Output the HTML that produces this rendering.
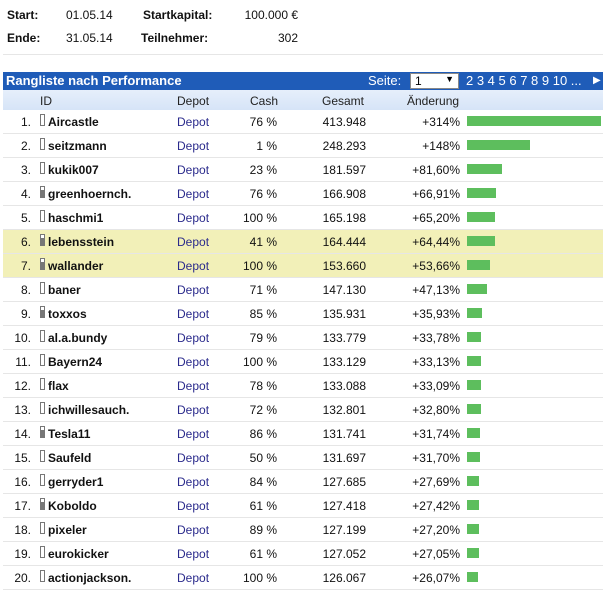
<!DOCTYPE html>
<html><head><meta charset="utf-8"><style>
*{margin:0;padding:0;box-sizing:border-box}
body{width:612px;height:587px;background:#fff;font-family:"Liberation Sans",Arial,sans-serif;font-size:12px;color:#111;position:relative;overflow:hidden}
.a{position:absolute;white-space:nowrap}
.b{font-weight:bold}
.top{position:absolute;left:3px;top:72px;width:600px;height:18px;background:#1f5cb8;color:#fff;font-size:13px}
.sub{position:absolute;left:3px;top:90px;width:600px;height:20px;background:linear-gradient(#e6effb,#d6e4f7);color:#222}
.row{position:absolute;left:3px;width:600px;height:24px;border-bottom:1px solid #e6e6e6}
.row span{position:absolute;top:5px;white-space:nowrap}
.n{right:572px;text-align:right}
.ic{left:37px;top:4px!important;width:5px;height:12px;border:1px solid #777;background:#fff}
.ic.f{background:linear-gradient(#fff 30%,#777 30%)}
.nm{left:45px;font-weight:bold}
.dp{left:174px;color:#2a2a8c}
.c{right:326px}
.g{right:237px}
.p{right:143px}
.bar{position:absolute;left:464px;top:6px!important;height:10px;background:#5dbe5d}
.hl{background:#f2f0b8}
</style></head><body>
<div class="a b" style="left:7px;top:8px">Start:</div>
<div class="a" style="left:66px;top:8px">01.05.14</div>
<div class="a b" style="left:143px;top:8px">Startkapital:</div>
<div class="a" style="right:314px;top:8px">100.000 €</div>
<div class="a b" style="left:7px;top:31px">Ende:</div>
<div class="a" style="left:66px;top:31px">31.05.14</div>
<div class="a b" style="left:141px;top:31px">Teilnehmer:</div>
<div class="a" style="right:314px;top:31px">302</div>
<div class="a" style="left:3px;top:54px;width:600px;height:1px;background:#e6e6e6"></div>

<div class="top">
<span class="a b" style="left:3px;top:1px">Rangliste nach Performance</span>
<span class="a" style="left:365px;top:1px">Seite:</span>
<span class="a" style="left:407px;top:1px;width:49px;height:16px;background:#fff;border:1px solid #888;color:#000;padding-left:4px;font-size:12px">1<span style="position:absolute;right:4px;top:0;font-size:9px">▼</span></span>
<span class="a" style="left:463px;top:1px">2 3 4 5 6 7 8 9 10 ...</span>
<span class="a" style="left:590px;top:3px;font-size:10px">▶</span>
</div>
<div class="sub">
<span class="a" style="left:37px;top:4px">ID</span>
<span class="a" style="left:174px;top:4px">Depot</span>
<span class="a" style="left:247px;top:4px">Cash</span>
<span class="a" style="left:319px;top:4px">Gesamt</span>
<span class="a" style="left:404px;top:4px">Änderung</span>
</div>

<div class="row" style="top:110px"><span class="n">1.</span><span class="ic"></span><span class="nm">Aircastle</span><span class="dp">Depot</span><span class="c">76 %</span><span class="g">413.948</span><span class="p">+314%</span><span class="bar" style="width:134px"></span></div>
<div class="row" style="top:134px"><span class="n">2.</span><span class="ic"></span><span class="nm">seitzmann</span><span class="dp">Depot</span><span class="c">1 %</span><span class="g">248.293</span><span class="p">+148%</span><span class="bar" style="width:63px"></span></div>
<div class="row" style="top:158px"><span class="n">3.</span><span class="ic"></span><span class="nm">kukik007</span><span class="dp">Depot</span><span class="c">23 %</span><span class="g">181.597</span><span class="p">+81,60%</span><span class="bar" style="width:35px"></span></div>
<div class="row" style="top:182px"><span class="n">4.</span><span class="ic f"></span><span class="nm">greenhoernch.</span><span class="dp">Depot</span><span class="c">76 %</span><span class="g">166.908</span><span class="p">+66,91%</span><span class="bar" style="width:29px"></span></div>
<div class="row" style="top:206px"><span class="n">5.</span><span class="ic"></span><span class="nm">haschmi1</span><span class="dp">Depot</span><span class="c">100 %</span><span class="g">165.198</span><span class="p">+65,20%</span><span class="bar" style="width:28px"></span></div>
<div class="row hl" style="top:230px"><span class="n">6.</span><span class="ic f"></span><span class="nm">lebensstein</span><span class="dp">Depot</span><span class="c">41 %</span><span class="g">164.444</span><span class="p">+64,44%</span><span class="bar" style="width:28px"></span></div>
<div class="row hl" style="top:254px"><span class="n">7.</span><span class="ic f"></span><span class="nm">wallander</span><span class="dp">Depot</span><span class="c">100 %</span><span class="g">153.660</span><span class="p">+53,66%</span><span class="bar" style="width:23px"></span></div>
<div class="row" style="top:278px"><span class="n">8.</span><span class="ic"></span><span class="nm">baner</span><span class="dp">Depot</span><span class="c">71 %</span><span class="g">147.130</span><span class="p">+47,13%</span><span class="bar" style="width:20px"></span></div>
<div class="row" style="top:302px"><span class="n">9.</span><span class="ic f"></span><span class="nm">toxxos</span><span class="dp">Depot</span><span class="c">85 %</span><span class="g">135.931</span><span class="p">+35,93%</span><span class="bar" style="width:15px"></span></div>
<div class="row" style="top:326px"><span class="n">10.</span><span class="ic"></span><span class="nm">al.a.bundy</span><span class="dp">Depot</span><span class="c">79 %</span><span class="g">133.779</span><span class="p">+33,78%</span><span class="bar" style="width:14px"></span></div>
<div class="row" style="top:350px"><span class="n">11.</span><span class="ic"></span><span class="nm">Bayern24</span><span class="dp">Depot</span><span class="c">100 %</span><span class="g">133.129</span><span class="p">+33,13%</span><span class="bar" style="width:14px"></span></div>
<div class="row" style="top:374px"><span class="n">12.</span><span class="ic"></span><span class="nm">flax</span><span class="dp">Depot</span><span class="c">78 %</span><span class="g">133.088</span><span class="p">+33,09%</span><span class="bar" style="width:14px"></span></div>
<div class="row" style="top:398px"><span class="n">13.</span><span class="ic"></span><span class="nm">ichwillesauch.</span><span class="dp">Depot</span><span class="c">72 %</span><span class="g">132.801</span><span class="p">+32,80%</span><span class="bar" style="width:14px"></span></div>
<div class="row" style="top:422px"><span class="n">14.</span><span class="ic f"></span><span class="nm">Tesla11</span><span class="dp">Depot</span><span class="c">86 %</span><span class="g">131.741</span><span class="p">+31,74%</span><span class="bar" style="width:13px"></span></div>
<div class="row" style="top:446px"><span class="n">15.</span><span class="ic"></span><span class="nm">Saufeld</span><span class="dp">Depot</span><span class="c">50 %</span><span class="g">131.697</span><span class="p">+31,70%</span><span class="bar" style="width:13px"></span></div>
<div class="row" style="top:470px"><span class="n">16.</span><span class="ic"></span><span class="nm">gerryder1</span><span class="dp">Depot</span><span class="c">84 %</span><span class="g">127.685</span><span class="p">+27,69%</span><span class="bar" style="width:12px"></span></div>
<div class="row" style="top:494px"><span class="n">17.</span><span class="ic f"></span><span class="nm">Koboldo</span><span class="dp">Depot</span><span class="c">61 %</span><span class="g">127.418</span><span class="p">+27,42%</span><span class="bar" style="width:12px"></span></div>
<div class="row" style="top:518px"><span class="n">18.</span><span class="ic"></span><span class="nm">pixeler</span><span class="dp">Depot</span><span class="c">89 %</span><span class="g">127.199</span><span class="p">+27,20%</span><span class="bar" style="width:12px"></span></div>
<div class="row" style="top:542px"><span class="n">19.</span><span class="ic"></span><span class="nm">eurokicker</span><span class="dp">Depot</span><span class="c">61 %</span><span class="g">127.052</span><span class="p">+27,05%</span><span class="bar" style="width:12px"></span></div>
<div class="row" style="top:566px"><span class="n">20.</span><span class="ic"></span><span class="nm">actionjackson.</span><span class="dp">Depot</span><span class="c">100 %</span><span class="g">126.067</span><span class="p">+26,07%</span><span class="bar" style="width:11px"></span></div>
</body></html>
